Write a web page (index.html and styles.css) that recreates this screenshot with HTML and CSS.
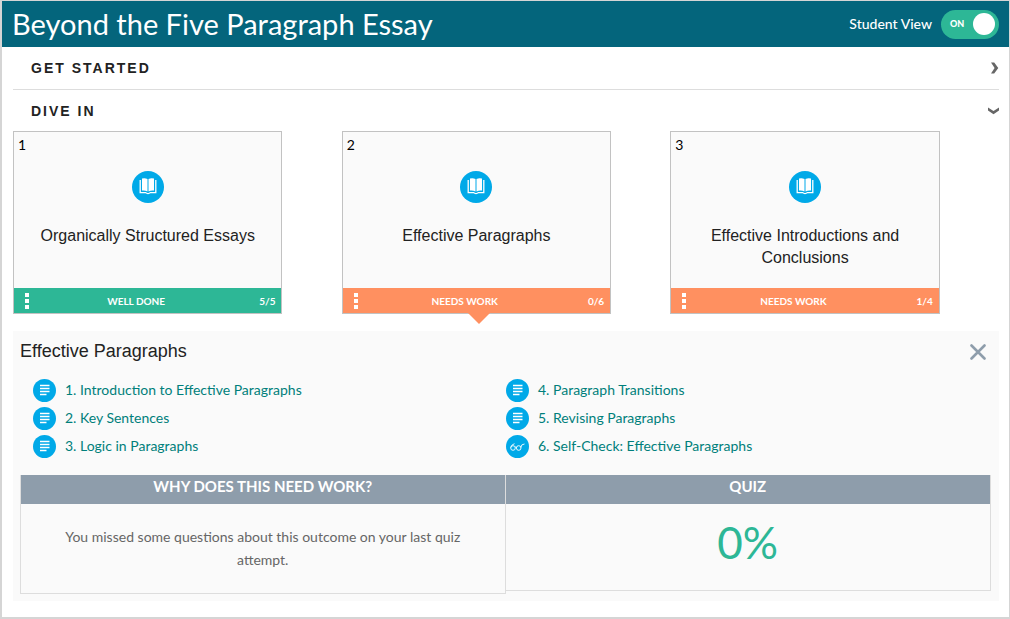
FILE: index.html
```html
<!DOCTYPE html>
<html lang="en">
<head>
  <meta charset="UTF-8">
  <title>Beyond the Five Paragraph Essay</title>
  <meta name="viewport" content="width=device-width, initial-scale=1">
  <link rel="stylesheet" href="styles.css">
</head>
<body>
  <!-- shared icons -->
  <svg class="icon-defs" aria-hidden="true">
    <symbol id="icon-book" viewBox="0 0 32 32">
      <circle cx="16" cy="16" r="16" fill="#00a9e8"/>
      <path d="M10 7.6 Q12.8 6.8 15.5 8 V20.4 Q12.8 19.2 10 19.6 Z" fill="#fff"/>
      <path d="M22 7.6 Q19.2 6.8 16.5 8 V20.4 Q19.2 19.2 22 19.6 Z" fill="#fff"/>
      <path d="M8.2 9 V21.6 H13.5 Q16 23.6 18.5 21.6 H23.8 V9" fill="none" stroke="#fff" stroke-width="1.3"/>
    </symbol>
    <symbol id="icon-page" viewBox="0 0 23 23">
      <circle cx="11.5" cy="11.5" r="11.5" fill="#00a9e8"/>
      <path d="M7 6.5 H16.5 M7 9.5 H16.5 M7 12.5 H16.5 M7 15.5 H13.5" stroke="#fff" stroke-width="1.4"/>
    </symbol>
    <symbol id="icon-glasses" viewBox="0 0 23 23">
      <circle cx="11.5" cy="11.5" r="11.5" fill="#00a9e8"/>
      <g fill="none" stroke="#fff" stroke-width="0.9">
        <circle cx="7" cy="13" r="2.3"/>
        <circle cx="12.7" cy="13" r="2.3"/>
        <path d="M9.2 12.3 Q9.9 11.5 10.6 12.3 M4.7 12.5 Q5.5 9.5 8.5 8.7 M14.9 12.5 Q15 9 18.5 9"/>
      </g>
    </symbol>
  </svg>

  <div class="page">
    <header class="topbar">
      <h1>Beyond the Five Paragraph Essay</h1>
      <label class="student-view">
        <span>Student View</span>
        <input type="checkbox" class="switch-input" checked>
        <span class="switch"><span class="switch-text">ON</span><span class="knob"></span></span>
      </label>
    </header>

    <main>
      <button class="section-toggle bordered" type="button" aria-expanded="false">
        <span>GET STARTED</span>
        <svg width="10" height="12" viewBox="0 0 10 12"><path d="M2 0.5 H5.2 L9.3 6 L5.2 11.5 H2 L5.6 6 Z" fill="#666"/></svg>
      </button>
      <button class="section-toggle" type="button" aria-expanded="true">
        <span>DIVE IN</span>
        <svg width="11" height="12" viewBox="0 0 11 12"><path d="M0 2.5 V5.5 L5.5 9.2 L11 5.5 V2.5 L5.5 6 Z" fill="#666"/></svg>
      </button>

      <div class="cards">
        <article class="card done">
          <span class="number">1</span>
          <svg class="book"><use href="#icon-book"/></svg>
          <h2>Organically Structured Essays</h2>
          <div class="status">
            <button type="button" class="dots" aria-label="More options"><i></i><i></i><i></i></button>
            <span class="status-text">WELL DONE</span>
            <span>5/5</span>
          </div>
        </article>
        <article class="card needs-work selected">
          <span class="number">2</span>
          <svg class="book"><use href="#icon-book"/></svg>
          <h2>Effective Paragraphs</h2>
          <div class="status">
            <button type="button" class="dots" aria-label="More options"><i></i><i></i><i></i></button>
            <span class="status-text">NEEDS WORK</span>
            <span>0/6</span>
          </div>
        </article>
        <article class="card needs-work">
          <span class="number">3</span>
          <svg class="book"><use href="#icon-book"/></svg>
          <h2>Effective Introductions and Conclusions</h2>
          <div class="status">
            <button type="button" class="dots" aria-label="More options"><i></i><i></i><i></i></button>
            <span class="status-text">NEEDS WORK</span>
            <span>1/4</span>
          </div>
        </article>
      </div>

      <section class="detail">
        <div class="detail-head">
          <h2>Effective Paragraphs</h2>
          <button type="button" class="close" aria-label="Close">
            <svg width="16" height="16" viewBox="0 0 16 16"><path d="M1.5 1.5 L14.5 14.5 M14.5 1.5 L1.5 14.5" stroke="#8e9dab" stroke-width="2.6" stroke-linecap="round"/></svg>
          </button>
        </div>

        <div class="links">
          <ul>
            <li><svg><use href="#icon-page"/></svg><a href="#">1. Introduction to Effective Paragraphs</a></li>
            <li><svg><use href="#icon-page"/></svg><a href="#">2. Key Sentences</a></li>
            <li><svg><use href="#icon-page"/></svg><a href="#">3. Logic in Paragraphs</a></li>
          </ul>
          <ul>
            <li><svg><use href="#icon-page"/></svg><a href="#">4. Paragraph Transitions</a></li>
            <li><svg><use href="#icon-page"/></svg><a href="#">5. Revising Paragraphs</a></li>
            <li><svg><use href="#icon-glasses"/></svg><a href="#">6. Self-Check: Effective Paragraphs</a></li>
          </ul>
        </div>

        <div class="results">
          <div class="panel">
            <h3>WHY DOES THIS NEED WORK?</h3>
            <p class="reason">You missed some questions about this outcome on your last quiz attempt.</p>
          </div>
          <div class="panel quiz">
            <h3>QUIZ</h3>
            <p class="score">0%</p>
          </div>
        </div>
      </section>
    </main>
  </div>
</body>
</html>
```

FILE: styles.css
```css
* {
  box-sizing: border-box;
}
body {
  margin: 0;
  font-family: "Liberation Sans", Arial, sans-serif;
  color: #222;
  background: #fff;
}
h1, h2, h3, p, ul {
  margin: 0;
  padding: 0;
  font-weight: normal;
}
button {
  font-family: inherit;
  background: none;
  border: none;
  padding: 0;
  cursor: pointer;
}
svg {
  display: block;
}
.icon-defs {
  display: none;
}
.page {
  min-height: 100vh;
  border: 1px solid #d5d5d5;
  border-width: 1px 1px 2px 2px;
}

/* top bar */
.topbar {
  display: flex;
  align-items: center;
  justify-content: space-between;
  height: 46px;
  padding: 0 10px;
  background: #04657c;
  color: #fff;
}
.topbar h1 {
  padding-bottom: 2px;
  font-family: Lato, "Liberation Sans", sans-serif;
  font-size: 29px;
}
.student-view {
  display: flex;
  align-items: center;
  gap: 9px;
  font-family: Lato, "Liberation Sans", sans-serif;
  font-size: 14px;
  font-weight: 500;
  line-height: 16px;
  cursor: pointer;
}
.switch-input {
  position: absolute;
  opacity: 0;
}
.switch {
  display: flex;
  align-items: center;
  justify-content: space-between;
  width: 58px;
  height: 29px;
  padding: 0 4px 0 9px;
  border-radius: 15px;
  background: #2db796;
}
.switch-text {
  font-size: 9px;
  font-weight: 900;
}
.knob {
  width: 22px;
  height: 22px;
  border-radius: 50%;
  background: #fff;
}

main {
  padding: 0 10px 15px 11px;
}
.section-toggle {
  display: flex;
  align-items: center;
  justify-content: space-between;
  width: 100%;
  height: 41px;
  padding-left: 18px;
  font-size: 14px;
  font-weight: bold;
  letter-spacing: 2px;
  color: #222;
}
.section-toggle.bordered {
  height: 43px;
  border-bottom: 1px solid #ddd;
}

/* cards */
.cards {
  display: grid;
  grid-template-columns: repeat(3, 1fr);
}
.card {
  position: relative;
  display: flex;
  flex-direction: column;
  align-items: center;
  width: 82%;
  height: 183px;
  border: 1px solid #c2c2c2;
  background: #fafafa;
}
.number {
  align-self: flex-start;
  height: 39px;
  padding: 4px;
  font-family: Lato, "Liberation Sans", sans-serif;
  font-size: 14px;
  color: #000;
}
.book {
  width: 32px;
  height: 32px;
}
.card h2 {
  padding: 22px 20px 0;
  font-size: 16px;
  line-height: 22px;
  text-align: center;
}
.status {
  display: flex;
  align-items: center;
  width: 100%;
  height: 25px;
  margin-top: auto;
  padding: 0 6px 0 11px;
  font-family: Lato, "Liberation Sans", sans-serif;
  font-size: 10px;
  font-weight: bold;
  color: #fff;
}
.done .status {
  background: #2db796;
}
.needs-work .status {
  background: #ff9060;
}
.status-text {
  flex: 1;
  padding-right: 16px;
  text-align: center;
}
.dots {
  display: flex;
  flex-direction: column;
  gap: 2px;
}
.dots i {
  width: 4px;
  height: 4px;
  background: #fff;
}
.selected::after {
  content: "";
  position: absolute;
  top: 100%;
  left: 50%;
  margin-left: -8px;
  border: 11px solid transparent;
  border-top-color: #ff9060;
  border-bottom: none;
}

/* detail of the selected card */
.detail {
  margin-top: 17px;
  padding: 0 8px 7px 7px;
  background: #fafafa;
}
.detail-head {
  display: flex;
  align-items: center;
  justify-content: space-between;
  height: 42px;
  padding-right: 5px;
}
.detail-head h2 {
  padding-bottom: 2px;
  font-size: 18px;
}
.links {
  display: grid;
  grid-template-columns: 1fr 1fr;
  padding: 3px 12px 15px 13px;
}
.links ul {
  list-style: none;
}
.links li {
  display: flex;
  align-items: center;
  gap: 9px;
  height: 28px;
}
.links svg {
  width: 23px;
  height: 23px;
}
.links a {
  padding-bottom: 2px;
  font-family: Lato, "Liberation Sans", sans-serif;
  font-size: 14px;
  color: #007f7b;
  text-decoration: none;
}
.results {
  display: grid;
  grid-template-columns: 1fr 1fr;
  align-items: start;
}
.panel {
  border: 1px solid #ddd;
  border-top: none;
}
.panel h3 {
  height: 29px;
  font-family: Lato, "Liberation Sans", sans-serif;
  font-size: 15px;
  font-weight: bold;
  line-height: 23px;
  text-align: center;
  color: #fff;
  background: #8e9dab;
}
.quiz {
  border-left: none;
}
.reason {
  padding: 21px 32px 22px;
  font-family: Lato, "Liberation Sans", sans-serif;
  font-size: 14px;
  line-height: 23px;
  text-align: center;
  color: #666;
}
.score {
  padding: 10px 0 20px;
  font-family: Lato, "Liberation Sans", sans-serif;
  font-size: 44px;
  line-height: 56px;
  text-align: center;
  color: #2db796;
}
```
